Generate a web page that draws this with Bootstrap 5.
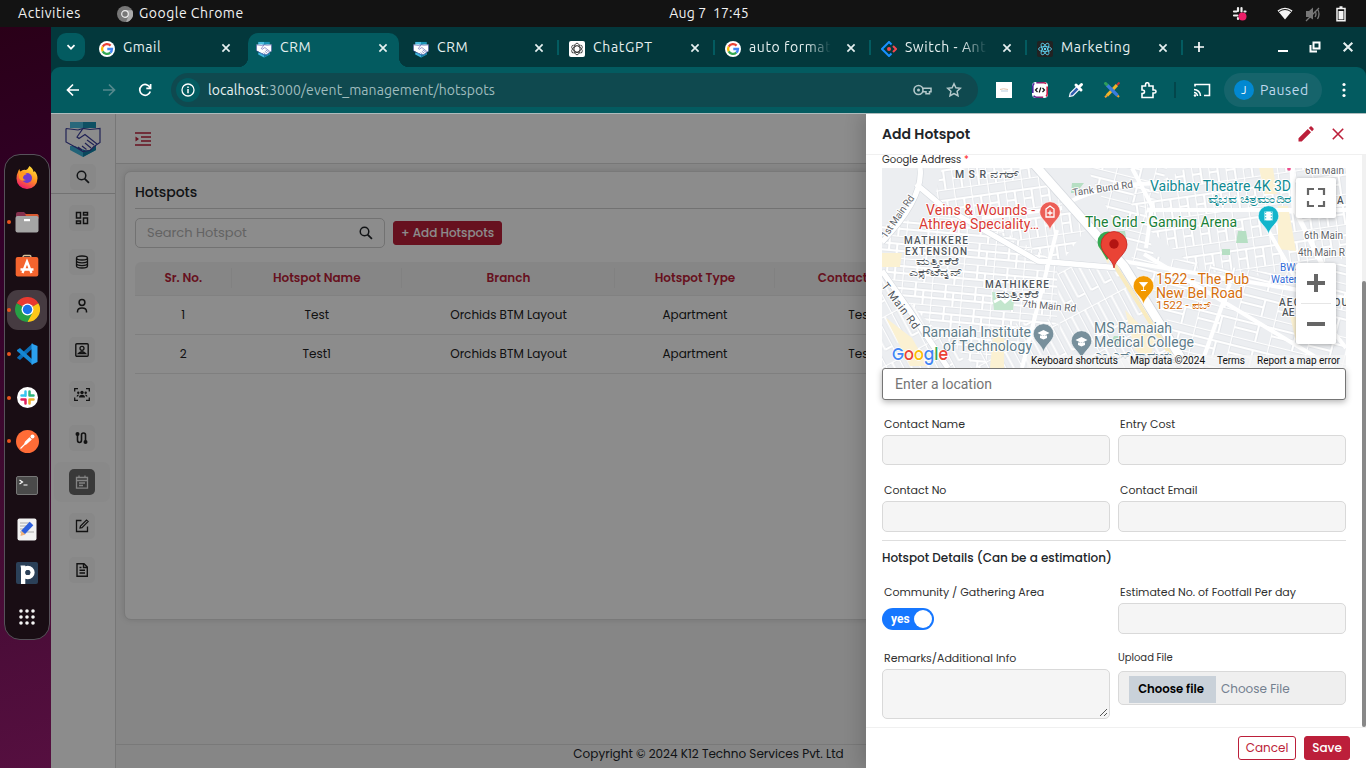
<!DOCTYPE html>
<html lang="en">
<head>
<meta charset="utf-8">
<title>CRM</title>
<link href="https://cdn.jsdelivr.net/npm/bootstrap@5.3.0/dist/css/bootstrap.min.css" rel="stylesheet">
<style>
  body{width:1366px;height:768px;overflow:hidden;font-family:Poppins,Inter,sans-serif;font-size:12px;color:#212529;background:#2c001e}
  svg{display:block;flex:none}
  .ui{font-family:Ubuntu,"Noto Sans","Open Sans",sans-serif}
  .desk-bar{height:27px;background:#131313;color:#f2f2f2;font-size:14px;padding:0 19px 0 18px}
  .dock-wrap{width:51px;background:linear-gradient(165deg,#2a0018 0,#33002a 30%,#3f0a30 60%,#560f40 100%);padding:127px 1px 0 4px}
  .dock{width:46px;height:486px;border:1px solid #57525a;border-radius:16px;background:#190d14;padding-top:1px}
  .dock-item{height:44px;width:44px}
  .dock-item.sel::before{content:"";position:absolute;inset:2px 2px;background:#463b41;border-radius:11px}
  .dock-item>svg{position:relative}
  .dock-item.run::after{content:"";position:absolute;left:2px;top:20px;width:4px;height:4px;border-radius:50%;background:#e95420}
  .chrome-win{width:1315px;flex:none}
  .tabstrip{height:40px;background:#03383c;color:#e6f0f0;font-size:14px}
  .tab-drop{width:28px;height:28px;border-radius:9px;background:#035b60;margin:0 5px 0 6px;flex:none}
  .btab{width:156px;flex:none;height:34px;margin-top:6px;padding:0 16px 0 9px}
  .btab>svg:first-child{margin-bottom:2px}
  .btab .ttl,.btab>svg:last-child{margin-bottom:5px}
  .btab.on{background:#035b60;border-radius:10px 10px 0 0;width:151px;margin-left:2px;margin-right:5px;padding-left:8px;padding-right:11px}
  .btab.on::before,.btab.on::after{content:"";position:absolute;bottom:0;width:10px;height:10px}
  .btab.on::before{left:-10px;background:radial-gradient(circle at 0 0,#03383c 10px,#035b60 10.5px)}
  .btab.on::after{right:-10px;background:radial-gradient(circle at 100% 0,#03383c 10px,#035b60 10.5px)}
  .btab.sep::after{content:"";position:absolute;right:1px;top:7px;width:2px;height:15px;background:#035b60}
  .btab .ttl{width:82px;white-space:nowrap;overflow:hidden;letter-spacing:.05px}
  .fade-r{-webkit-mask-image:linear-gradient(90deg,#000 70%,transparent)}
  .toolbar{height:46px;background:#035b60;color:#e8f2f2;border-radius:9px 9px 0 0}
  .omni{width:807px;height:34px;border-radius:17px;background:#0f494f;font-size:14px;padding:0 14px 0 5px}
  .omni .inf{width:24px;height:24px;border-radius:50%;background:#035b60}
  .omni .urltext{letter-spacing:.07px}
  .omni .rest{color:#9fbcbe}
  .paused{height:34px;width:98px;border-radius:17px;background:#16646b;color:#bfd8ee;font-size:14px;padding-left:10px;letter-spacing:.55px}
  .paused b{width:20px;height:20px;border-radius:50%;background:#0288d1;font-size:11px;font-weight:400;color:#fff}
  .app{height:655px;background:#f4f4f4;border-top:1px solid #aebcbd}
  .side{width:65px;background:#fff;border-right:1px solid #d9d9d9}
  .side-top{height:80px;border-bottom:1px solid #cfcfcf;padding-top:7px}
  .sbtn{width:26px;height:26px;border-radius:5px;background:#f7f7f7}
  .sbtn.on{background:#696969;color:#ddd}
  .srow{height:40px;width:56px;margin:0 3px 4px 0;border-radius:7px}
  .srow.on{background:#fafafa}
  .apphead{height:50px;background:#fff;border-bottom:1px solid #d9d9d9;padding-left:19px}
  .panel{height:449px;margin:7px 9px 0 8px;border:1px solid #dcdcdc;border-radius:7px;background:#fff;padding:0 10px;box-shadow:0 0 6px rgba(0,0,0,.12)}
  .panel h1{font-size:14px;font-weight:500;height:37px;line-height:41px;border-bottom:1px solid #d0d0d0;margin:0 0 9px;letter-spacing:-.05px}
  .search{width:250px;height:30px;border:1px solid #cfcfcf;border-radius:5px;font-size:13px;color:#b5b5b5;padding:0 11px}
  .btn-brand{--bs-btn-bg:#bc1f3a;--bs-btn-border-color:#bc1f3a;--bs-btn-color:#fff;--bs-btn-font-size:12px;--bs-btn-border-radius:3px;--bs-btn-padding-x:7px;--bs-btn-padding-y:0;height:24px;font-weight:500}
  .btn-line{--bs-btn-bg:#fff;--bs-btn-border-color:#bc1f3a;--bs-btn-color:#bc1f3a;--bs-btn-font-size:12px;--bs-btn-border-radius:3px;--bs-btn-padding-x:0;--bs-btn-padding-y:0;height:24px}
  .grid-table{margin-top:14px;width:1213px;table-layout:fixed;text-align:center;border-collapse:separate;border-spacing:0}
  .grid-table th{height:34px;background:#f5f5f5;color:#bc1f3a;font-weight:600;border-bottom:1px solid #ebebeb;padding:0 0 2px;position:relative;white-space:nowrap;font-size:12px}
  .grid-table th:first-child{border-top-left-radius:6px}
  .grid-table th:not(:last-child)::after{content:"";position:absolute;right:0;top:6px;height:20px;width:1px;background:#ebebeb}
  .grid-table td{height:39px;border-bottom:1px solid #e8e8e8;padding:0;font-size:12px;color:#222}
  .appfoot{height:24px;border-top:1px solid #ddd;text-align:center;font-size:12px;line-height:18px;padding-right:67px}
  .veil{position:absolute;inset:0;background:rgba(0,0,0,.45)}
  .drawer{position:absolute;top:0;right:0;width:500px;height:654px;background:#fff;box-shadow:-6px 0 16px rgba(0,0,0,.14)}
  .drawer-head{height:41px;border-bottom:1px solid #f0f0f0;padding:0 19px 0 16px}
  .drawer-head h2{font-size:14px;font-weight:600;margin:0}
  .drawer-body{height:572px;padding:0 20px 0 16px}
  .drawer-foot{height:41px;border-top:1px solid #f0f0f0;padding:0 16px 0 0}
  .gaddr{height:13px;line-height:9px;font-size:10px;color:#303030}
  .gaddr span{color:#f22}
  .lbl{font-size:11px;line-height:16px;height:19px;padding-left:2px;color:#303030;white-space:nowrap}
  .fld{height:30px;border:1px solid #d9d9d9;border-radius:5px;background:#f5f5f5}
  .loc{height:32px;border:1px solid #757575;border-radius:3px;font:14px Roboto,sans-serif;color:#757575;padding:0 12px;box-shadow:0 2px 6px rgba(0,0,0,.3);line-height:30px}
  .fgrid{display:grid;grid-template-columns:1fr 1fr;column-gap:8px}
  .sw{width:52px;height:22px;border-radius:11px;background:#1677ff;color:#fff;font:bold 12px Roboto,sans-serif;padding:0 2px 0 9px}
  .sw i{width:18px;height:18px;border-radius:50%;background:#fff}
  .upl{height:34px;border:1px solid #d9d9d9;border-radius:5px;background:#efefef;padding:4px 10px 0;color:#74808f}
  .upl b{background:#c9d1d9;color:#000;width:87px;height:27px;font-weight:600;font-size:11.7px;padding-right:3px}
  .upl span{margin-left:5px;line-height:25px;font-size:12px}
  .sbar{position:absolute;right:0;top:41px;width:4px;height:572px;background:#f1f1f1}
  .sbar i{position:absolute;left:0;right:0;top:126px;bottom:0;background:#888;border-radius:2px}
  .halo text{paint-order:stroke;stroke:#fff;stroke-width:2px;stroke-linejoin:round}
</style>
</head>
<body class="d-flex flex-column">

<svg width="0" height="0" class="position-absolute">
  <symbol id="g" viewBox="0 0 16 16"><circle cx="8" cy="8" r="8" fill="#fff"/><g fill="none" stroke-width="2.3"><path d="M11.6 4.6A5 5 0 0 0 3.7 5.6" stroke="#ea4335"/><path d="M3.7 5.6a5 5 0 0 0 0 4.8" stroke="#fbbc05"/><path d="M3.7 10.4a5 5 0 0 0 7.6 1.3" stroke="#34a853"/><path d="M11.3 11.7A5 5 0 0 0 13 8H8.3" stroke="#4285f4"/></g></symbol>
  <symbol id="crm" viewBox="0 0 36 36"><path d="M5 1h13v9H5z" fill="#4dbde0"/><path d="M18 1h13v9H18z" fill="#1a93b5"/><path d="M5 25h26v4l-13 7-13-7z" fill="#3fb4da"/><path d="M18 25h13v4l-13 7z" fill="#1583a8"/><path d="M1 7h10l7 .5 7-.5h10v15l-5 3-5 4-4 .5-8-3-12-6z" fill="#fff"/><path d="M1 7.500v13.500l11 6 6 3.500 3-.5 4-.5 4-4 6-4V7.500l-10 1-7-1-6 8.500 2 1.500 6-4 12 9.500M1 7.500l12 1.500 5-1.500M20 22l6 5M17 25l4.500 3.500M13 26l4 3M22 19l7 5" fill="none" stroke="#3b3f9b" stroke-width="1.200"/></symbol>
  <symbol id="x" viewBox="0 0 10 10"><path d="M1.400 1.400l7.200 7.200M8.600 1.400l-7.200 7.200" stroke="currentColor" stroke-width="1.700"/></symbol>
  <symbol id="mag" viewBox="0 0 16 16"><circle cx="6.300" cy="6.300" r="4.900" fill="none" stroke="currentColor" stroke-width="1.700"/><path d="M9.800 9.800l5 5" stroke="currentColor" stroke-width="2"/></symbol>
</svg>

<header class="desk-bar ui d-flex align-items-center position-relative flex-shrink-0">
  <span style="width:99px;letter-spacing:.55px">Activities</span>
  <svg width="16" height="16" viewBox="0 0 16 16"><circle cx="8" cy="8" r="8" fill="#777"/><path d="M8 4.300h7.200A8 8 0 0 1 9 16l2.500-6" fill="#aaa"/><circle cx="8" cy="8" r="3.300" fill="#777" stroke="#eee" stroke-width="1.200"/></svg>
  <span style="letter-spacing:.5px;margin-left:6px">Google Chrome</span>
  <span class="position-absolute top-0 bottom-0 start-50 translate-middle-x d-flex align-items-center" style="white-space:pre;letter-spacing:.15px;padding-left:52px">Aug 7  17:45</span>
  <div class="ms-auto d-flex align-items-center">
    <svg width="16" height="16" viewBox="0 0 16 16"><g stroke="#eee" stroke-width="2.200" stroke-linecap="round"><path d="M6 2v3M2 5.500h2.500M9.500 2v3.500M12.500 5.500h1M2 9.500h3.500M6 12v1"/></g><circle cx="10.500" cy="10.500" r="4" fill="#ec1e68"/></svg>
    <svg width="18" height="16" viewBox="0 0 18 16" style="margin-left:28px"><path d="M1.500 4.600Q9-1 16.500 4.600L9 13.500z" fill="#f4f4f4"/><path d="M3 5.600Q9 1.400 15 5.600" fill="none" stroke="#131313" stroke-width="1"/></svg>
    <svg width="16" height="16" viewBox="0 0 16 16" style="margin-left:11px"><path d="M1 5h3l4-3.500v12L4 11H1z" fill="#777"/><path d="M10 5q2 3 0 6M12.500 3q3 5 0 10M1 15L14 2" stroke="#777" fill="none" stroke-width="1.300"/></svg>
    <svg width="10" height="16" viewBox="0 0 10 16" style="margin-left:15px;margin-right:1px"><path d="M1 2.500h8v12.300H1zM3.500 1h3" fill="none" stroke="#f4f4f4" stroke-width="1.500"/><path d="M2.500 5h5v8.400h-5z" fill="#f4f4f4"/></svg>
  </div>
</header>

<div class="d-flex flex-grow-1">
  <aside class="dock-wrap flex-shrink-0">
    <div class="dock d-flex flex-column">
      <div class="dock-item position-relative d-flex align-items-center justify-content-center"><svg width="22" height="23" viewBox="0 0 22 23"><defs><linearGradient id="ff" x1=".8" y1="0" x2=".3" y2="1"><stop offset="0" stop-color="#ffe63f"/><stop offset=".45" stop-color="#ff9a1f"/><stop offset="1" stop-color="#f0156d"/></linearGradient></defs><path d="M2 6q.5-2 1.500-3 0 2 1 2.500Q7 3 10 4q2-1 3.500-4 4 3 4 6 1-.5 1-1 3 3 3 7.500A10.500 10.500 0 0 1 .5 12.500Q.3 9 2 6z" fill="url(#ff)"/><circle cx="11" cy="12" r="5" fill="#6e3bd0"/><path d="M3 7q4-2 8 1-3 .5-4 3 0 3 3 3-5 2-7-2z" fill="#ff9a1f"/></svg></div>
      <div class="dock-item run position-relative d-flex align-items-center justify-content-center"><svg width="24" height="22" viewBox="0 0 24 22"><path d="M1 3q0-2 2-2h6l2 2h11q1.500 0 1.500 1.500V8H1z" fill="#85304e"/><path d="M10 3h12q1.500 0 1.500 1.500V7H12z" fill="#d8582f"/><rect x=".5" y="5" width="23" height="16.500" rx="2" fill="#a5a5a5"/><rect x="9" y="8" width="6" height="2.200" fill="#fff"/></svg></div>
      <div class="dock-item position-relative d-flex align-items-center justify-content-center"><svg width="24" height="23" viewBox="0 0 24 23"><path d="M8 5V3q0-1.500 1.500-1.500h5Q16 1.500 16 3v2" fill="none" stroke="#d9c49a" stroke-width="1.300"/><rect x=".7" y="3" width="22.600" height="19.500" rx="2" fill="#f4642e"/><path d="M7.500 19L12 7.500 16.500 19M5.500 15.500h13" fill="none" stroke="#fff" stroke-width="2.300"/></svg></div>
      <div class="dock-item run sel position-relative d-flex align-items-center justify-content-center"><svg width="25" height="25" viewBox="0 0 24 24"><path d="M12 12L1.600 6A12 12 0 0 1 22.400 6z" fill="#ea3a30"/><path d="M12 12L22.400 6A12 12 0 0 1 12 24z" fill="#fdc818"/><path d="M12 12l-3 11.600A12 12 0 0 1 1.600 6z" fill="#27a045"/><path d="M7 14l2 9.600 3 .4 5-9z" fill="#27a045"/><path d="M12.500 24l4.700-9.200L23 8v8z" fill="#fdc818"/><circle cx="12" cy="12" r="5.700" fill="#fff"/><circle cx="12" cy="12" r="4.500" fill="#1a73e8"/></svg></div>
      <div class="dock-item run position-relative d-flex align-items-center justify-content-center"><svg width="22" height="22" viewBox="0 0 22 22"><path d="M1 15l3 2L17 5V0L1.500 14z" fill="#0a6cb4"/><path d="M1 7l3-2 13 12v5L1 8z" fill="#1587d3"/><path d="M15.500.5L21.500 3v16l-6 2.800V6z" fill="#2ba0ee"/></svg></div>
      <div class="dock-item run position-relative d-flex align-items-center justify-content-center"><svg width="21" height="21" viewBox="0 0 21 21"><circle cx="10.500" cy="10.500" r="10.500" fill="#fff"/><g stroke-width="2.500" stroke-linecap="round"><path d="M8.500 4.500v4.200M4.500 8.500h4" stroke="#36c5f0"/><path d="M12.500 4.500v4M12.500 8.500h4" stroke="#2eb67d"/><path d="M12.500 12.500h4M12.500 12.500v4" stroke="#ecb22e"/><path d="M8.500 12.500v4M4.500 12.500h4" stroke="#e01e5a"/></g></svg></div>
      <div class="dock-item run position-relative d-flex align-items-center justify-content-center"><svg width="23" height="23" viewBox="0 0 23 23"><circle cx="11.500" cy="11.500" r="11.500" fill="#ff6c37"/><path d="M4.500 18.500l5-5M8.500 14.500l1.500-.5 5-4.500-1.500-1.500-4 4z" stroke="#fff" stroke-width="1.200" fill="#fff"/><circle cx="16.500" cy="6.500" r="2" fill="#fff"/></svg></div>
      <div class="dock-item position-relative d-flex align-items-center justify-content-center"><svg width="22" height="19" viewBox="0 0 22 19"><rect x=".5" y=".5" width="21" height="18" rx="1.500" fill="#4a4a4a" stroke="#777"/><path d="M3.500 4l3 2-3 2M7.500 9h4" stroke="#fff" fill="none" stroke-width="1.200"/></svg></div>
      <div class="dock-item position-relative d-flex align-items-center justify-content-center"><svg width="20" height="23" viewBox="0 0 20 23"><rect x=".5" y=".5" width="19" height="22" rx="2" fill="#f2f2f2"/><path d="M3 5h10M3 8h8M3 11h6M3 14h14" stroke="#aaa"/><path d="M6 14.500L14.500 5.500" stroke="#2d5fdc" stroke-width="5"/><path d="M3.500 18l1-5 4 3.500z" fill="#eeb27a"/></svg></div>
      <div class="dock-item position-relative d-flex align-items-center justify-content-center"><svg width="22" height="22" viewBox="0 0 22 22"><rect width="22" height="22" rx="2" fill="#2b4058"/><circle cx="11.800" cy="10.500" r="4.700" fill="none" stroke="#fff" stroke-width="4.300"/><path d="M4.500 3.500h4.800V22H5V6z" fill="#fff"/><circle cx="11.800" cy="10.500" r="2.500" fill="#2b4058"/></svg></div>
      <div class="dock-item position-relative d-flex align-items-center justify-content-center"><svg width="16" height="16" viewBox="0 0 16 16"><g stroke="#f5f5f5" stroke-width="3.600" stroke-linecap="round" stroke-dasharray="0 6"><path d="M2 2h12.100M2 8h12.100M2 14h12.100"/></g></svg></div>
    </div>
  </aside>

  <main class="chrome-win d-flex flex-column">
    <div class="tabstrip ui d-flex align-items-center">
      <div class="tab-drop d-flex align-items-center justify-content-center"><svg width="10" height="10" viewBox="0 0 10 10"><path d="M1.500 3.200L5 6.700l3.500-3.500" fill="none" stroke="#fff" stroke-width="1.700"/></svg></div>
      <div class="btab d-flex align-items-center" style="padding-right:15px"><svg width="16" height="16"><use href="#g"/></svg><span class="ttl ms-2" style="letter-spacing:.5px">Gmail</span><svg class="ms-auto" width="10" height="10"><use href="#x"/></svg></div>
      <div class="btab on position-relative d-flex align-items-center"><svg width="16" height="17"><use href="#crm"/></svg><span class="ttl ms-2" style="letter-spacing:.6px">CRM</span><svg class="ms-auto" width="10" height="10"><use href="#x"/></svg></div>
      <div class="btab sep position-relative d-flex align-items-center"><svg width="16" height="17"><use href="#crm"/></svg><span class="ttl ms-2" style="letter-spacing:.6px">CRM</span><svg class="ms-auto" width="10" height="10"><use href="#x"/></svg></div>
      <div class="btab sep position-relative d-flex align-items-center"><svg width="16" height="16" viewBox="0 0 16 16"><rect width="16" height="16" rx="2" fill="#fff"/><g fill="none" stroke="#333" stroke-width=".9"><ellipse cx="8" cy="8" rx="3" ry="5.800"/><ellipse cx="8" cy="8" rx="3" ry="5.800" transform="rotate(60 8 8)"/><ellipse cx="8" cy="8" rx="3" ry="5.800" transform="rotate(120 8 8)"/></g></svg><span class="ttl ms-2" style="letter-spacing:.7px">ChatGPT</span><svg class="ms-auto" width="10" height="10"><use href="#x"/></svg></div>
      <div class="btab sep position-relative d-flex align-items-center"><svg width="16" height="16"><use href="#g"/></svg><span class="ttl fade-r ms-2" style="letter-spacing:.6px">auto format</span><svg class="ms-auto" width="10" height="10"><use href="#x"/></svg></div>
      <div class="btab sep position-relative d-flex align-items-center"><svg width="16" height="16" viewBox="0 0 16 16"><path d="M10.500 3.500L8 1 1 8l7 7 2.500-2.500" fill="none" stroke="#1890ff" stroke-width="2"/><path d="M12 5l3 3-3 3" fill="none" stroke="#f5464f" stroke-width="2"/><circle cx="8" cy="8" r="2" fill="#f5464f"/></svg><span class="ttl fade-r ms-2" style="letter-spacing:.55px">Switch - Ant</span><svg class="ms-auto" width="10" height="10"><use href="#x"/></svg></div>
      <div class="btab sep position-relative d-flex align-items-center"><svg width="16" height="16" viewBox="0 0 16 16"><rect width="16" height="16" rx="2" fill="#222"/><g fill="none" stroke="#61dafb" stroke-width=".8"><ellipse cx="8" cy="8" rx="6.500" ry="2.500"/><ellipse cx="8" cy="8" rx="6.500" ry="2.500" transform="rotate(60 8 8)"/><ellipse cx="8" cy="8" rx="6.500" ry="2.500" transform="rotate(120 8 8)"/></g><circle cx="8" cy="8" r="1.200" fill="#61dafb"/></svg><span class="ttl ms-2" style="letter-spacing:.65px">Marketing</span><svg class="ms-auto" width="10" height="10"><use href="#x"/></svg></div>
      <svg width="12" height="12" viewBox="0 0 12 12" style="margin-left:9px"><path d="M6 1v10M1 6h10" stroke="#fff" stroke-width="1.700"/></svg>
      <div class="ms-auto d-flex align-items-center" style="padding-right:12px">
        <svg width="10" height="12" viewBox="0 0 10 12"><path d="M0 10h10" stroke="#fff" stroke-width="2"/></svg>
        <svg width="12" height="12" viewBox="0 0 12 12" style="margin-left:21px"><path d="M4.500 1.500h6v6h-6zM1.500 4v6.500H8" fill="none" stroke="#fff" stroke-width="2"/></svg>
        <svg width="12" height="12" style="margin-left:21px"><use href="#x"/></svg>
      </div>
    </div>

    <div style="background:#03383c"><div class="toolbar ui d-flex align-items-center">
      <svg width="14" height="14" viewBox="0 0 14 14" style="margin-left:15px"><path d="M13 7H2M7 1.500L1.500 7 7 12.500" fill="none" stroke="#fff" stroke-width="1.700"/></svg>
      <svg width="14" height="14" viewBox="0 0 14 14" style="margin-left:22px"><path d="M1 7h11M7 1.500L12.500 7 7 12.500" fill="none" stroke="#55898d" stroke-width="1.700"/></svg>
      <svg width="14" height="14" viewBox="0 0 14 14" style="margin-left:22px"><path d="M12 4.500A5.400 5.400 0 1 0 12.300 8.500M12.600 1v4.300H8.300" fill="none" stroke="#fff" stroke-width="1.700"/></svg>
      <div class="omni d-flex align-items-center" style="margin-left:19px">
        <span class="inf d-flex align-items-center justify-content-center"><svg width="14" height="14" viewBox="0 0 14 14"><circle cx="7" cy="7" r="6" fill="none" stroke="#fff" stroke-width="1.300"/><path d="M7 6v4.200M7 3.600v1.400" stroke="#fff" stroke-width="1.500"/></svg></span>
        <span class="ms-2 urltext">localhost<span class="rest">:3000/event_management/hotspots</span></span>
        <svg class="ms-auto" width="19" height="12" viewBox="0 0 19 12"><circle cx="5.500" cy="6" r="4.500" fill="none" stroke="#b3c8ca" stroke-width="1.600"/><circle cx="5.500" cy="6" r="1.500" fill="#b3c8ca"/><path d="M9.500 4.200h8.500v3.600h-1.500v2h-3.500v-2h-3.500" fill="none" stroke="#b3c8ca" stroke-width="1.500"/></svg>
        <svg width="16" height="16" viewBox="0 0 16 16" style="margin-left:14px;margin-right:2px"><path d="M8 1.800l1.900 4 4.400.5-3.200 3 .9 4.400L8 11.500l-4 2.200.9-4.400-3.200-3 4.400-.5z" fill="none" stroke="#b3c8ca" stroke-width="1.500"/></svg>
      </div>
      <svg width="16" height="16" viewBox="0 0 16 16" style="margin-left:18px"><path d="M0 0h16v16H0z" fill="#fff"/><path d="M4 7.500q3-1.500 8 0" fill="none" stroke="#e3c3ae"/><path d="M5 9h7" stroke="#bcd"/></svg>
      <svg width="16" height="16" viewBox="0 0 16 16" style="margin-left:20px"><defs><linearGradient id="cd"><stop stop-color="#4527a0"/><stop offset="1" stop-color="#d01c42"/></linearGradient></defs><rect x="0" y="0" width="16" height="16" rx="4" fill="#fff"/><rect x=".8" y=".8" width="14.400" height="14.400" rx="3.500" fill="none" stroke="url(#cd)" stroke-width="1.600" stroke-dasharray="10 3"/><path d="M5.500 6l-2 2 2 2M10.500 6l2 2-2 2M8.800 5.500l-1.600 5" fill="none" stroke="#111" stroke-width="1.200"/></svg>
      <svg width="16" height="16" viewBox="0 0 16 16" style="margin-left:20px"><path d="M1.500 14.500l.8-3.500L9 4.300l2.700 2.700L5 13.700z" fill="#2f5db0" stroke="#f2f6fc" stroke-width="1.200"/><path d="M8 3l5 5M10.500 5.500L13.500 2.500" stroke="#fff" stroke-width="3" stroke-linecap="round"/></svg>
      <svg width="16" height="16" viewBox="0 0 16 16" style="margin-left:20px"><path d="M3 13.500L13 3" stroke="#f0b429" stroke-width="3.200"/><path d="M13 3l2.500-2.500" stroke="#c33" stroke-width="2"/><path d="M3 3l10.500 10.500" stroke="#3b7ddd" stroke-width="3.200"/><path d="M.5.500L3.500 3.500" stroke="#2e9e5b" stroke-width="3"/><path d="M1 15.300l2-1.800M15 15l-1.500-1.500" stroke="#f0a030" stroke-width="2"/></svg>
      <svg width="17" height="17" viewBox="0 0 17 17" style="margin-left:20px"><path d="M2 4h3.500V2.500a1.500 1.500 0 0 1 3.500 0V4H13v4h1.500a1.500 1.500 0 0 1 0 3H13v4.500H2v-4q2.500 0 2.500-1.800T2 8z" fill="none" stroke="#fff" stroke-width="1.600"/></svg>
      <span style="width:2px;height:16px;background:#03464b;margin-left:17px"></span>
      <svg width="18" height="16" viewBox="0 0 18 16" style="margin-left:17px"><path d="M2 4.500V2.500h14.500v11H11" fill="none" stroke="#fff" stroke-width="1.600"/><path d="M1 7.500a6.500 6.500 0 0 1 6.500 6.500M1 10.500a3.500 3.500 0 0 1 3.500 3.500" fill="none" stroke="#fff" stroke-width="1.500"/><circle cx="2" cy="13.500" r="1.200" fill="#fff"/></svg>
      <div class="paused d-flex align-items-center" style="margin-left:13px"><b class="d-flex align-items-center justify-content-center">J</b><span style="margin-left:6px">Paused</span></div>
      <svg width="4" height="16" viewBox="0 0 4 16" style="margin-left:20px"><g fill="#fff"><circle cx="2" cy="2.500" r="1.600"/><circle cx="2" cy="8" r="1.600"/><circle cx="2" cy="13.500" r="1.600"/></g></svg>
    </div></div>

    <section class="app position-relative d-flex overflow-hidden">
      <nav class="side flex-shrink-0 d-flex flex-column align-items-center">
        <div class="side-top w-100 d-flex flex-column align-items-center">
          <svg width="36" height="36"><use href="#crm"/></svg>
          <span class="sbtn d-flex align-items-center justify-content-center" style="margin-top:7px"><svg width="14" height="14"><use href="#mag"/></svg></span>
        </div>
        <div style="height:4px"></div>
        <div class="srow d-flex align-items-center justify-content-center"><span class="sbtn d-flex align-items-center justify-content-center"><svg width="14" height="14" viewBox="0 0 14 14"><path d="M1.500 1.500h4v5.500h-4zM8.500 1.500h4V4h-4zM8.500 7h4v5.500h-4zM1.500 10h4v2.500h-4z" fill="none" stroke="#222" stroke-width="1.500"/></svg></span></div>
        <div class="srow d-flex align-items-center justify-content-center"><span class="sbtn d-flex align-items-center justify-content-center"><svg width="14" height="14" viewBox="0 0 14 14"><path d="M1.500 3q0-2 5.500-2t5.500 2v8q0 2-5.500 2t-5.500-2zq0 2 5.500 2t5.500-2M1.500 5.800q0 2 5.500 2t5.500-2M1.500 8.600q0 2 5.500 2t5.500-2" fill="none" stroke="#222" stroke-width="1.300"/></svg></span></div>
        <div class="srow d-flex align-items-center justify-content-center"><span class="sbtn d-flex align-items-center justify-content-center"><svg width="14" height="16" viewBox="0 0 14 16"><circle cx="7" cy="4.500" r="2.900" fill="none" stroke="#222" stroke-width="1.500"/><path d="M2.500 14.500v-1q0-3.500 4.500-3.500t4.500 3.500v1" fill="none" stroke="#222" stroke-width="1.500"/></svg></span></div>
        <div class="srow d-flex align-items-center justify-content-center"><span class="sbtn d-flex align-items-center justify-content-center"><svg width="14" height="14" viewBox="0 0 14 14"><rect x=".8" y=".8" width="12.400" height="12.400" rx="1" fill="none" stroke="#222" stroke-width="1.400"/><circle cx="7" cy="5.300" r="2" fill="none" stroke="#222" stroke-width="1.300"/><path d="M3.500 10.500q3.500-3.500 7 0z" fill="none" stroke="#222" stroke-width="1.300"/></svg></span></div>
        <div class="srow d-flex align-items-center justify-content-center"><span class="sbtn d-flex align-items-center justify-content-center"><svg width="16" height="13" viewBox="0 0 16 13"><path d="M.7 3.500V.7H4M12 .7h3.300v2.800M.7 9.500v2.800H4M12 12.300h3.300V9.500" fill="none" stroke="#222" stroke-width="1.300"/><g fill="#222"><circle cx="8" cy="4.500" r="1.700"/><circle cx="4.300" cy="4.800" r="1.200"/><circle cx="11.700" cy="4.800" r="1.200"/><path d="M5 9.500q0-2.800 3-2.800t3 2.800zM2.500 8.500q0-2 2.500-2l-1 2zM13.500 8.500q0-2-2.500-2l1 2z"/></g></svg></span></div>
        <div class="srow d-flex align-items-center justify-content-center"><span class="sbtn d-flex align-items-center justify-content-center"><svg width="13" height="14" viewBox="0 0 13 14"><path d="M2.500 4v5q0 2.500 2 2.500t2-2.500V4q0-2 2-2t2 2v6" fill="none" stroke="#222" stroke-width="1.600"/><circle cx="2.500" cy="3" r="2" fill="#222"/><circle cx="10.500" cy="11" r="2" fill="#222"/></svg></span></div>
        <div class="srow on d-flex align-items-center justify-content-center"><span class="sbtn on d-flex align-items-center justify-content-center"><svg width="14" height="14" viewBox="0 0 14 14"><path d="M1.500 2.500h11v10.700h-11zM1.500 5.500h11M4 .5v2M10 .5v2M4 8h6M4 10.500h4" fill="none" stroke="#eee" stroke-width="1.300"/></svg></span></div>
        <div class="srow d-flex align-items-center justify-content-center"><span class="sbtn d-flex align-items-center justify-content-center"><svg width="14" height="14" viewBox="0 0 14 14"><path d="M6.500 1.500h-5v11h11v-5" fill="none" stroke="#222" stroke-width="1.300"/><path d="M5 9l.5-2L11.500 1l1.700 1.500L7 8.700z" fill="none" stroke="#222" stroke-width="1.200"/></svg></span></div>
        <div class="srow d-flex align-items-center justify-content-center"><span class="sbtn d-flex align-items-center justify-content-center"><svg width="14" height="14" viewBox="0 0 14 14"><path d="M2 .8h7l3.300 3.200v9.200H2zM8.500 1v3.500H12M4.500 4.500h2M4.500 7.300h5.500M4.500 10h5.500" fill="none" stroke="#222" stroke-width="1.400"/></svg></span></div>
      </nav>
      <div class="flex-grow-1 d-flex flex-column">
        <div class="apphead d-flex align-items-center"><svg width="16" height="14" viewBox="0 0 16 14"><path d="M0 1h16M6 5h10M6 9h10M0 13h16" stroke="#bc1f3a" stroke-width="1.500"/><path d="M.5 4.500L4 7 .5 9.500z" fill="#bc1f3a"/></svg></div>
        <div class="panel">
          <h1>Hotspots</h1>
          <div class="d-flex align-items-center gap-2">
            <div class="search d-flex align-items-center"><span>Search Hotspot</span><svg class="ms-auto text-dark" width="14" height="14"><use href="#mag"/></svg></div>
            <button class="btn btn-brand">+ Add Hotspots</button>
          </div>
          <table class="grid-table">
            <colgroup><col style="width:96.500px"><col style="width:170.500px"><col style="width:213px"><col style="width:160px"><col style="width:175px"><col></colgroup>
            <thead><tr><th>Sr. No.</th><th>Hotspot Name</th><th>Branch</th><th>Hotspot Type</th><th>Contact Name</th><th></th></tr></thead>
            <tbody>
              <tr><td>1</td><td>Test</td><td>Orchids BTM Layout</td><td>Apartment</td><td>Test1</td><td></td></tr>
              <tr><td>2</td><td>Test1</td><td>Orchids BTM Layout</td><td>Apartment</td><td>Test1</td><td></td></tr>
            </tbody>
          </table>
        </div>
        <div class="appfoot mt-auto">Copyright © 2024 K12 Techno Services Pvt. Ltd</div>
      </div>

      <div class="veil"></div>

      <div class="drawer">
        <div class="drawer-head d-flex align-items-center">
          <h2>Add Hotspot</h2>
          <svg class="ms-auto" width="16" height="16" viewBox="0 0 16 16"><path d="M.5 15.500v-3.300L9.800 3l3.200 3.200-9.300 9.300zM10.800 2L12.400.6q.6-.5 1.200 0l1.900 1.900q.5.600 0 1.200L14 5.200z" fill="#bc1f3a"/></svg>
          <svg width="12" height="12" viewBox="0 0 12 12" style="margin:0 3px 0 18px"><path d="M.8.8l10.400 10.400M11.200.8L.8 11.200" stroke="#bc1f3a" stroke-width="1.600"/></svg>
        </div>
        <div class="drawer-body overflow-hidden">
          <div class="gaddr">Google Address <span>*</span></div>
          <svg width="464" height="200" viewBox="0 0 464 200" font-family="Roboto, 'Noto Sans', sans-serif">
            <defs>
              <pattern id="p1" width="17" height="30" patternUnits="userSpaceOnUse" patternTransform="rotate(-8)"><path d="M0 0h17M0 11h17M0 20h9M0 0v30M9 11v19" stroke="#d5d9de" stroke-width="3.600" fill="none"/><path d="M0 0h17M0 11h17M0 20h9M0 0v30M9 11v19" stroke="#fff" stroke-width="2.600" fill="none"/></pattern>
              <pattern id="p2" width="30" height="22" patternUnits="userSpaceOnUse" patternTransform="rotate(5)"><path d="M0 0h30M0 8h30M0 15h30M0 0v22M14 0v15M22 8v14" stroke="#d5d9de" stroke-width="3.500" fill="none"/><path d="M0 0h30M0 8h30M0 15h30M0 0v22M14 0v15M22 8v14" stroke="#fff" stroke-width="2.500" fill="none"/></pattern>
              <pattern id="p3" width="15" height="44" patternUnits="userSpaceOnUse" patternTransform="rotate(-28)"><path d="M0 0h15M0 0v44M7.500 0v30M7.500 30h7.500" stroke="#d5d9de" stroke-width="3.400" fill="none"/><path d="M0 0h15M0 0v44M7.500 0v30M7.500 30h7.500" stroke="#fff" stroke-width="2.400" fill="none"/></pattern>
              <pattern id="p4" width="38" height="26" patternUnits="userSpaceOnUse" patternTransform="rotate(14)"><path d="M0 0h38M0 9h38M0 17h24M0 0v26M24 9v17" stroke="#d5d9de" stroke-width="3.400" fill="none"/><path d="M0 0h38M0 9h38M0 17h24M0 0v26M24 9v17" stroke="#fff" stroke-width="2.400" fill="none"/></pattern>
              <path id="pin" d="M0 18.500C-1 11-10.300 7-10.300 0a10.300 10.300 0 0 1 20.600 0C10.300 7 1 11 0 18.500z" stroke="#fff" stroke-width=".6"/>
            </defs>
            <path d="M0 0h464v200H0z" fill="#eceef1"/>
            <path d="M60 0h95l50 60-30 40-75-35-50-25z" fill="url(#p1)"/>
            <path d="M0 55l90-10 85 50 0 60-80 45-95-90z" fill="url(#p2)"/>
            <path d="M205 0h80l-20 60 10 40-15 10z" fill="url(#p4)"/>
            <path d="M265 60l-20-30 60-30h159v90l-100 20-50-10z" fill="url(#p1)"/>
            <path d="M175 95l65 10 60 95h-120z" fill="url(#p3)"/>
            <path d="M250 85l140 20 74-10v105H310z" fill="url(#p4)"/>
            <path d="M0 105l90 95H0zM100 160l75-10 10 50H95z" fill="url(#p3)"/>
            <path d="M109 121l24 3-2 17h-18z" fill="#c9e7d2" opacity="0"/>
            <path d="M110 124l23 1-2 17h-19z" fill="#c3e6cd"/><path d="M112 134l7-4 4 4 8-7" stroke="#fff" stroke-width="3" fill="none"/>
            <path d="M190 15h12l-8 10h-5zM235 63h8l2 12h-10zM356 63h8l2 12h-12zM340 81h8v6h-8zM446 130h8l-3 18h-5zM232 168h9l-4 8h-9z" fill="#b6dfc3"/>
            <g fill="#fbf1d2"><path d="M377 0h14l4 26h-12zM396 38l10 0 8 45-18-2zM0 85l20 0-2 14H0zM4 150l26 20 16 28H28zM112 160h10v40h-14zM222 66l10 14-6 16-10-18zM243 142l30 30-6 22-14-12zM408 148l14 3 4 16-12 6z"/></g>
            <g fill="none" stroke-linejoin="round">
              <path d="M0 103l28 40 38 57M38 0q4 30-38 74M34 16l26 22 96 55 82 7" stroke="#d5d9de" stroke-width="6.500"/>
              <path d="M0 103l28 40 38 57M38 0q4 30-38 74M34 16l26 22 96 55 82 7" stroke="#fff" stroke-width="5.300"/>
              <path d="M185 35Q230 12 290 16M250 0l20 38-6 42M265 42h199M234 92l230 38M100 50l80-10M175 62L140 200M318 200l30-85M386 62l40 70 38 48M262 86l190 114" stroke="#fff" stroke-width="4"/>
              <path d="M152-4l90 102 62 100" stroke="#d5d9de" stroke-width="10"/>
              <path d="M152-4l90 102 62 100" stroke="#fff" stroke-width="8.500"/>
              <path d="M232 96l56 90" stroke="#f9ebbf" stroke-width="4"/>
              <path d="M410 0l2 40 30 60" stroke="#fff" stroke-width="5"/>
            </g>
            <g class="halo" font-size="10" fill="#5f6368">
              <text x="73" y="10" font-size="10.500" font-weight="500" fill="#50565c" textLength="31">M S R</text><text x="108" y="9.500" font-size="9.500" textLength="28" lengthAdjust="spacingAndGlyphs" font-weight="500" fill="#50565c">ನಗರ್</text>
              <text transform="translate(191 28) rotate(-8)" textLength="61">Tank Bund Rd</text>
              <text transform="translate(4 71) rotate(-55)" textLength="50">1st Main Rd</text>
              <text transform="translate(-1 118) rotate(53)" textLength="55" font-size="11" fill="#50565c">T Main Rd</text>
              <text transform="translate(140 139) rotate(5)" textLength="54">7th Main Rd</text>
              <text x="423" y="6" textLength="39">6th Main</text><text x="422" y="71" textLength="39">6th Main</text><text x="416" y="88" textLength="47">4th Main R</text>
              <g font-weight="500" fill="#50565c"><text x="22" y="76" textLength="64">MATHIKERE</text><text x="23" y="87" textLength="62">EXTENSION</text><text x="34" y="97" textLength="42" lengthAdjust="spacingAndGlyphs" font-size="9.500">ಮತ್ತೀಕೆರೆ</text><text x="27" y="108" textLength="54" lengthAdjust="spacingAndGlyphs" font-size="9.500">ಎಕ್ಸ್‌ಟೆನ್ಶನ್</text><text x="103" y="120" textLength="64">MATHIKERE</text><text x="114" y="130" textLength="42" lengthAdjust="spacingAndGlyphs" font-size="9.500">ಮತ್ತೀಕೆರೆ</text><text x="397" y="138" letter-spacing="1.200">AECS LAYOU</text><text x="400" y="148">AE</text><text x="455" y="36">A</text></g>
              <g font-size="14" fill="#d93a35"><text x="44" y="47" textLength="109">Veins &amp; Wounds -</text><text x="37" y="61" textLength="120">Athreya Speciality…</text></g>
              <g font-size="14" fill="#108a92"><text x="268" y="23" textLength="141">Vaibhav Theatre 4K 3D</text><text x="326" y="35" textLength="84" lengthAdjust="spacingAndGlyphs" font-size="11">ವೈಭವ ಚಿತ್ರಮಂದಿರ</text></g>
              <text x="203" y="59" font-size="14" fill="#188038" textLength="152">The Grid - Gaming Arena</text>
              <g font-size="14" fill="#d56e0c"><text x="274" y="116" textLength="93">1522 - The Pub</text><text x="274" y="130" textLength="87">New Bel Road</text><text x="274" y="141" font-size="11" textLength="56" lengthAdjust="spacingAndGlyphs">1522 - ಪಬ್</text></g>
              <g font-size="14" fill="#607d8b"><text x="40" y="169" textLength="109">Ramaiah Institute</text><text x="61" y="183" textLength="89">of Technology</text><text x="212" y="165" textLength="78">MS Ramaiah</text><text x="212" y="179" textLength="100">Medical College</text><text x="212" y="191" textLength="82" lengthAdjust="spacingAndGlyphs" font-size="11">ಎಂ ಎಸ್ ರಾಮಯ್ಯ</text></g>
              <g fill="#2f6bd8"><text x="398" y="103">BWS</text><text x="389" y="115">Water</text></g>
            </g>
            <use href="#pin" x="168" y="44" fill="#ec5f57"/><path d="M164 41l4-3 4 3v8h-8zM168 42.500v5M165.500 45h5" fill="none" stroke="#fff" stroke-width="1.300"/>
            <use href="#pin" x="386.500" y="48" fill="#12b5cb"/><path d="M382.500 43.500h8v9h-8z" fill="#fff"/><path d="M383.700 43.500v9M389.300 43.500v9" stroke="#12b5cb" stroke-dasharray="1.400 1.400"/>
            <use href="#pin" x="261.500" y="118" fill="#f29900"/><path d="M257.500 114.500h8l-4 4.500zM261.500 118v4" fill="#fff" stroke="#fff" stroke-width=".8"/><path d="M259 122.500h5" stroke="#fff"/>
            <use href="#pin" x="161.500" y="166" fill="#78909c"/><path d="M155.500 165l6-3 6 3-6 3zM158 167.500v2.500l3.500 1.500 3.500-1.500v-2.500" fill="#fff"/>
            <use href="#pin" x="199.500" y="173" fill="#78909c"/><path d="M193.500 172l6-3 6 3-6 3zM196 174.500v2.500l3.500 1.500 3.500-1.500v-2.500" fill="#fff"/>
            <circle cx="226" cy="74" r="10.500" fill="#34a853"/><path d="M219 82l6 10 6-8z" fill="#34a853"/>
            <path d="M232 100c-1-9-13-14-13-23.500a13 13 0 0 1 26 0C245 86 233 91 232 100z" fill="#ea4335" stroke="#c5221f" stroke-width=".8"/><circle cx="232" cy="76" r="4.700" fill="#b31412"/>
            <path d="M145 187h319v13H145z" fill="#f5f5f5" opacity=".75"/>
            <g font-size="10" fill="#111"><text x="149" y="196" textLength="87">Keyboard shortcuts</text><text x="248" y="196" textLength="75">Map data ©2024</text><text x="335" y="196" textLength="28">Terms</text><text x="375" y="196" textLength="83">Report a map error</text></g>
            <text x="10" y="192" font-size="17.500" font-family="Poppins, Lato, sans-serif" font-weight="500" textLength="56" lengthAdjust="spacingAndGlyphs" stroke="#fff" stroke-width="1.500" paint-order="stroke"><tspan fill="#4285f4">G</tspan><tspan fill="#ea4335">o</tspan><tspan fill="#fbbc05">o</tspan><tspan fill="#4285f4">g</tspan><tspan fill="#34a853">l</tspan><tspan fill="#ea4335">e</tspan></text>
            <g style="filter:drop-shadow(0 1px 2px rgba(0,0,0,.3))" fill="#fff"><rect x="414" y="10" width="40" height="40" rx="2"/><rect x="414" y="95" width="40" height="81" rx="2"/></g>
            <path d="M426 27v-6h6M436 21h6v6M442 33v5h-6M432 38h-6v-5" fill="none" stroke="#666" stroke-width="2.200"/>
            <path d="M419 135.500h30" stroke="#e6e6e6"/><path d="M434 106v18M425 115h18M425 156h18" stroke="#666" stroke-width="4"/>
            <circle cx="407" cy="1" r="1.800" fill="#ee4a8b"/>
          </svg>
          <div class="loc bg-white">Enter a location</div>
          <div class="fgrid" style="margin-top:16px">
            <div><div class="lbl">Contact Name</div><div class="fld"></div></div><div><div class="lbl">Entry Cost</div><div class="fld"></div></div>
          </div>
          <div class="fgrid" style="margin-top:17px">
            <div><div class="lbl">Contact No</div><div class="fld" style="height:31px"></div></div><div><div class="lbl">Contact Email</div><div class="fld" style="height:31px"></div></div>
          </div>
          <div style="border-top:1px solid #dedede;margin-top:8px"></div>
          <div style="font-size:12px;font-weight:500;line-height:18px;padding-top:8px;height:43px">Hotspot Details (Can be a estimation)</div>
          <div class="fgrid">
            <div><div class="lbl">Community / Gathering Area</div><div class="sw d-flex align-items-center justify-content-between" style="margin-top:5px">yes<i></i></div></div>
            <div><div class="lbl">Estimated No. of Footfall Per day</div><div class="fld" style="height:31px"></div></div>
          </div>
          <div class="fgrid" style="margin-top:16px">
            <div><div class="lbl">Remarks/Additional Info</div><div class="fld d-flex align-items-end justify-content-end" style="height:50px"><svg width="10" height="10" viewBox="0 0 10 10"><path d="M1 8L8 1M5 8l3-3" stroke="#555"/></svg></div></div>
            <div><div class="lbl ps-0" style="font-size:10px;height:21px;line-height:15px">Upload File</div><div class="upl d-flex"><b class="d-flex align-items-center justify-content-center">Choose file</b><span>Choose File</span></div></div>
          </div>
        </div>
        <div class="drawer-foot d-flex align-items-center justify-content-end gap-2">
          <button class="btn btn-line" style="width:58px">Cancel</button><button class="btn btn-brand px-0" style="width:46px">Save</button>
        </div>
        <div class="sbar"><i></i></div>
      </div>
    </section>
  </main>
</div>
<script src="https://cdn.jsdelivr.net/npm/bootstrap@5.3.0/dist/js/bootstrap.bundle.min.js"></script>
</body>
</html>
